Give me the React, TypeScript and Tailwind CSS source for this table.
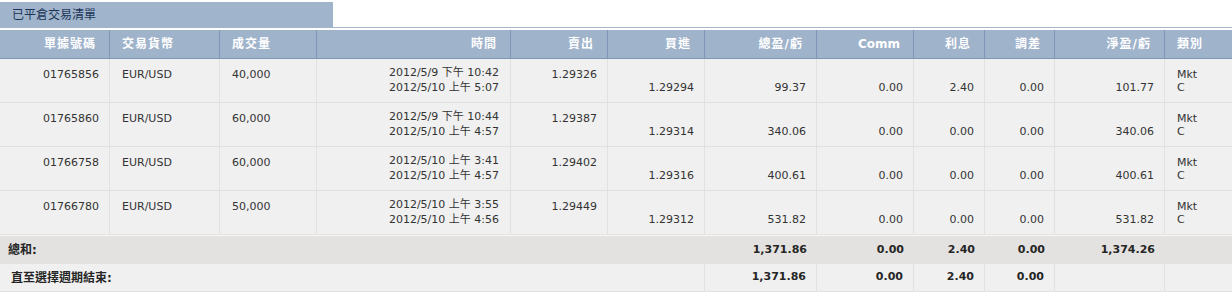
import React from "react";

const cols =
  "grid grid-cols-[110px_110px_97px_194px_97px_97px_112px_97px_71px_70px_110px_67px]";

type Row = {
  id: string;
  vol: string;
  t1: string;
  t2: string;
  sell: string;
  buy: string;
  pl: string;
  comm: string;
  int: string;
  adj: string;
  net: string;
};

const rows: Row[] = [
  { id: "01765856", vol: "40,000", t1: "2012/5/9 下午 10:42", t2: "2012/5/10 上午 5:07", sell: "1.29326", buy: "1.29294", pl: "99.37", comm: "0.00", int: "2.40", adj: "0.00", net: "101.77" },
  { id: "01765860", vol: "60,000", t1: "2012/5/9 下午 10:44", t2: "2012/5/10 上午 4:57", sell: "1.29387", buy: "1.29314", pl: "340.06", comm: "0.00", int: "0.00", adj: "0.00", net: "340.06" },
  { id: "01766758", vol: "60,000", t1: "2012/5/10 上午 3:41", t2: "2012/5/10 上午 4:57", sell: "1.29402", buy: "1.29316", pl: "400.61", comm: "0.00", int: "0.00", adj: "0.00", net: "400.61" },
  { id: "01766780", vol: "50,000", t1: "2012/5/10 上午 3:55", t2: "2012/5/10 上午 4:56", sell: "1.29449", buy: "1.29312", pl: "531.82", comm: "0.00", int: "0.00", adj: "0.00", net: "531.82" },
];

const headers: { label: string; align: "left" | "right"; cjk: boolean }[] = [
  { label: "單據號碼", align: "right", cjk: true },
  { label: "交易貨幣", align: "left", cjk: true },
  { label: "成交量", align: "left", cjk: true },
  { label: "時間", align: "right", cjk: true },
  { label: "賣出", align: "right", cjk: true },
  { label: "買進", align: "right", cjk: true },
  { label: "總盈/虧", align: "right", cjk: true },
  { label: "Comm", align: "right", cjk: false },
  { label: "利息", align: "right", cjk: true },
  { label: "調差", align: "right", cjk: true },
  { label: "淨盈/虧", align: "right", cjk: true },
  { label: "類別", align: "left", cjk: true },
];

const cell = "border-r border-[#e1e1e1] h-full";

export default function App() {
  return (
    <div className="w-[1232px] h-[292px] bg-white font-['DejaVu_Sans','Noto_Sans_CJK_TC',sans-serif] text-[11px] text-[#333333] overflow-hidden">
      <div className="h-[2px]" />
      {/* title */}
      <div className="flex h-[26px]">
        <div className="w-[333px] bg-[#a0b4cc] flex items-center pl-[12px] pb-[1px] text-[12px] text-[#1c3558]">
          已平倉交易清單
        </div>
        <div className="flex-1 border-b border-[#a3b6ce]" />
      </div>
      <div className="h-[2px]" />
      {/* header */}
      <div className={`${cols} h-[29px] bg-[#9fb3cb] border-b border-[#7f97b6]`}>
        {headers.map((h, i) => (
          <div
            key={i}
            className={`flex items-center h-full font-bold text-white text-[12px] ${
              i < headers.length - 1 ? "border-r border-[#7f97b6]" : ""
            } ${h.align === "right" ? "justify-end pr-[13px]" : "justify-start pl-[12px]"} ${
              h.cjk ? "tracking-[1px]" : ""
            }`}
          >
            {h.label}
          </div>
        ))}
      </div>
      {/* rows */}
      {rows.map((r, i) => (
        <div
          key={i}
          className={`${cols} h-[44px] bg-[#f0f0f0] border-b border-[#e1e1e1] leading-[15px]`}
        >
          <div className={`${cell} text-right pr-[10px] pt-[8px]`}>{r.id}</div>
          <div className={`${cell} pl-[12px] pt-[8px]`}>EUR/USD</div>
          <div className={`${cell} pl-[12px] pt-[8px]`}>{r.vol}</div>
          <div className={`${cell} text-right pr-[11px] pt-[6px]`}>
            <div>{r.t1}</div>
            <div>{r.t2}</div>
          </div>
          <div className={`${cell} text-right pr-[10px] pt-[8px]`}>{r.sell}</div>
          <div className={`${cell} text-right pr-[10px] pt-[21px]`}>{r.buy}</div>
          <div className={`${cell} text-right pr-[10px] pt-[21px]`}>{r.pl}</div>
          <div className={`${cell} text-right pr-[10px] pt-[21px]`}>{r.comm}</div>
          <div className={`${cell} text-right pr-[10px] pt-[21px]`}>{r.int}</div>
          <div className={`${cell} text-right pr-[10px] pt-[21px]`}>{r.adj}</div>
          <div className={`${cell} text-right pr-[10px] pt-[21px]`}>{r.net}</div>
          <div className="h-full pl-[12px] pt-[9px] leading-[13px]">
            <div>Mkt</div>
            <div>C</div>
          </div>
        </div>
      ))}
      <div className="h-[1px] bg-[#f7f7f7]" />
      {/* total */}
      <div className={`${cols} h-[28px] bg-[#e3e2e0] font-bold text-[#262626] items-center`}>
        <div className="col-span-6 pl-[8px] text-[12px]">總和:</div>
        <div className="text-right pr-[10px]">1,371.86</div>
        <div className="text-right pr-[10px]">0.00</div>
        <div className="text-right pr-[10px]">2.40</div>
        <div className="text-right pr-[10px]">0.00</div>
        <div className="text-right pr-[10px]">1,374.26</div>
        <div />
      </div>
      {/* until */}
      <div className={`${cols} h-[28px] bg-[#f0f0f0] font-bold text-[#262626] border-b border-[#e1e1e1]`}>
        <div className="col-span-6 pl-[11px] text-[12px] border-r border-[#e1e1e1] flex items-center">
          直至選擇週期結束:
        </div>
        <div className="text-right pr-[10px] border-r border-[#e1e1e1] flex items-center justify-end">1,371.86</div>
        <div className="text-right pr-[10px] border-r border-[#e1e1e1] flex items-center justify-end">0.00</div>
        <div className="text-right pr-[10px] border-r border-[#e1e1e1] flex items-center justify-end">2.40</div>
        <div className="text-right pr-[10px] border-r border-[#e1e1e1] flex items-center justify-end">0.00</div>
        <div className="border-r border-[#e1e1e1]" />
        <div />
      </div>
    </div>
  );
}
